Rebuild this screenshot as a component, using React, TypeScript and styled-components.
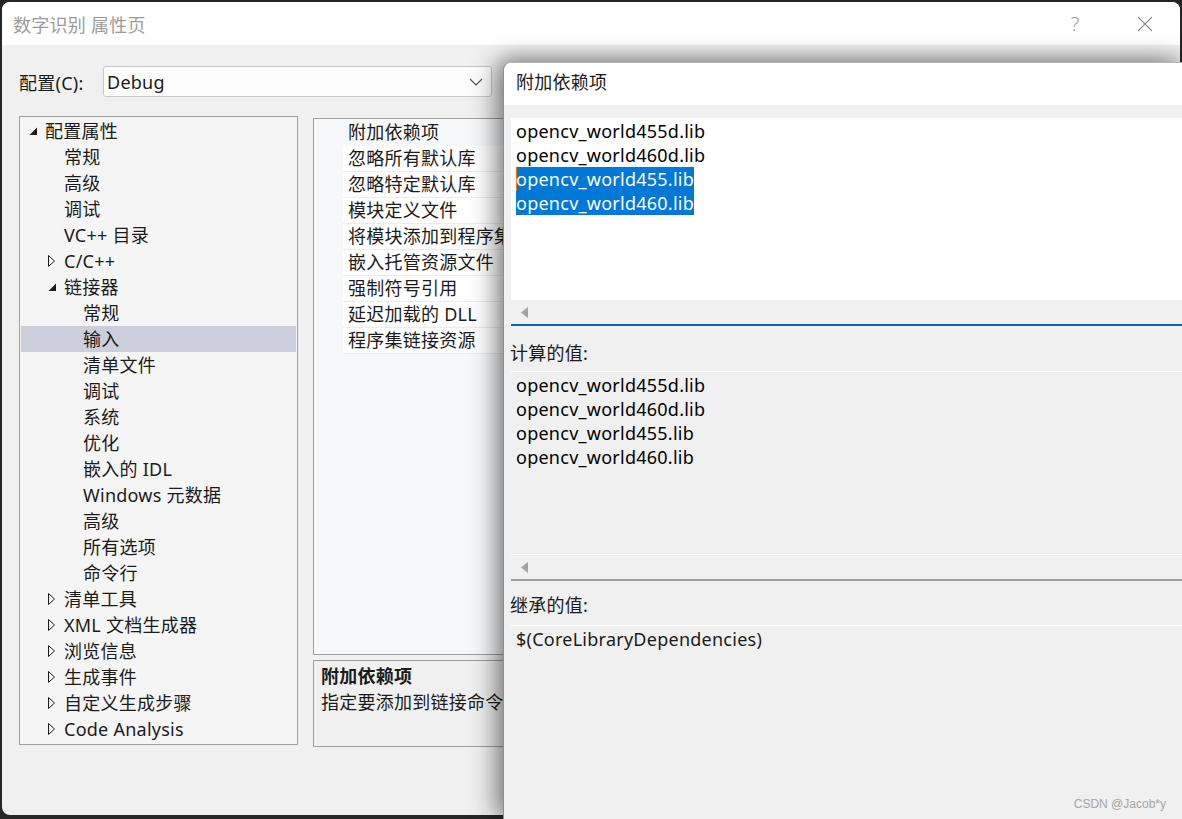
import React from "react";
import styled, { createGlobalStyle } from "styled-components";

const GlobalStyle = createGlobalStyle`
  html, body { margin: 0; padding: 0; background: #262626; }
  body { font-family: "Noto Sans", "Noto Sans CJK SC", sans-serif; }
`;

const FONT = `"Noto Sans", "Noto Sans CJK SC", sans-serif`;

const Screen = styled.div`
  position: relative;
  width: 1182px;
  height: 819px;
  overflow: hidden;
  box-sizing: border-box;
  padding: 2px 2px 4px 2px;
  background: #262626;
  font-family: ${FONT};
  font-size: 18px;
  letter-spacing: 0.25px;
  color: #1b1b1b;
`;

const Window = styled.div`
  height: 100%;
  display: flex;
  flex-direction: column;
  border-radius: 8px;
  overflow: hidden;
  background: #f0f0f0;
`;

const TitleBar = styled.div`
  height: 43px;
  flex: none;
  display: flex;
  align-items: center;
  background: #ffffff;
  padding-left: 11px;
`;

const TitleText = styled.div`
  flex: 1;
  color: #9b9b9b;
  font-size: 18px;
`;

const TitleButton = styled.div`
  width: 70px;
  height: 43px;
  display: flex;
  align-items: center;
  justify-content: center;
  color: #9a9a9a;
  font-size: 20px;
  font-weight: 300;
`;

const Body = styled.div`
  flex: 1;
  display: flex;
  flex-direction: column;
  padding: 21px 0 0 17px;
`;

const ConfigRow = styled.div`
  display: flex;
  align-items: center;
  height: 31px;
`;

const ConfigLabel = styled.div`
  width: 84px;
`;

const Select = styled.div`
  width: 389px;
  height: 31px;
  box-sizing: border-box;
  display: flex;
  align-items: center;
  justify-content: space-between;
  padding: 0 8px 0 3px;
  background: #fdfdfd;
  border: 1px solid #c8c8c8;
  border-radius: 3px;
`;

const Panels = styled.div`
  display: flex;
  gap: 15px;
  margin-top: 19px;
`;

const TreeBox = styled.div`
  width: 279px;
  height: 629px;
  box-sizing: border-box;
  padding: 1px;
  border: 1px solid #a0a0a0;
  background: #f5f5f5;
`;

const TreeRow = styled.div<{ $level: number; $selected?: boolean }>`
  height: 26px;
  line-height: 26px;
  display: flex;
  align-items: center;
  padding-left: ${(p) => 5 + p.$level * 19}px;
  background: ${(p) => (p.$selected ? "#cccedb" : "transparent")};
  white-space: nowrap;
`;

const Toggle = styled.span`
  width: 19px;
  height: 26px;
  flex: none;
  display: flex;
  align-items: center;
  padding-left: 3px;
  box-sizing: border-box;
`;

const RightCol = styled.div`
  flex: 1;
  margin: 2px 20px 0 0;
  display: flex;
  flex-direction: column;
  gap: 5px;
`;

const GridBox = styled.div`
  height: 537px;
  box-sizing: border-box;
  padding-top: 1px;
  border: 1px solid #a0a0a0;
  background: #f7f8fa;
  overflow: hidden;
`;

const GridRow = styled.div<{ $selected?: boolean }>`
  margin-left: 29px;
  padding-left: 5px;
  height: 26px;
  line-height: 25px;
  box-sizing: border-box;
  border-bottom: 1px solid ${(p) => (p.$selected ? "transparent" : "#ececec")};
  background: ${(p) => (p.$selected ? "transparent" : "#ffffff")};
  white-space: nowrap;
`;

const DescBox = styled.div`
  height: 87px;
  box-sizing: border-box;
  padding: 2px 7px;
  border: 1px solid #a0a0a0;
  background: #f0f0f0;
  line-height: 26px;
  white-space: nowrap;
  overflow: hidden;
`;

const DescTitle = styled.div`
  font-weight: 700;
`;

const Popup = styled.div`
  position: absolute;
  left: 503px;
  top: 62px;
  right: 0;
  bottom: 0;
  display: flex;
  flex-direction: column;
  background: #f0f0f0;
  border-left: 1px solid #8e8e8e;
  border-top: 1px solid #b4b4b4;
  border-top-left-radius: 8px;
  box-shadow: -8px 0 26px rgba(0, 0, 0, 0.42), 0 -6px 18px rgba(0, 0, 0, 0.18);
  overflow: hidden;
`;

const PopupHeader = styled.div`
  height: 42px;
  flex: none;
  box-sizing: border-box;
  padding: 6px 0 0 12px;
  line-height: 26px;
  background: #ffffff;
`;

const PopupBody = styled.div`
  flex: 1;
  display: flex;
  flex-direction: column;
  padding: 13px 0 0 7px;
`;

const EditBox = styled.div`
  background: #ffffff;
  border-bottom: 2px solid #0067c0;
`;

const TextArea = styled.div`
  height: 182px;
  box-sizing: border-box;
  padding: 1px 0 0 5px;
  line-height: 24px;
  color: #000;
`;

const Line = styled.div<{ $selected?: boolean; $caret?: boolean }>`
  width: fit-content;
  white-space: nowrap;
  background: ${(p) => (p.$selected ? "#0078d7" : "transparent")};
  color: ${(p) => (p.$selected ? "#ffffff" : "#000000")};
  box-shadow: ${(p) => (p.$caret ? "inset 1px 0 0 #f07800" : "none")};
`;

const HScroll = styled.div<{ $sep?: boolean }>`
  height: ${(p) => (p.$sep ? 25 : 24)}px;
  box-sizing: border-box;
  display: flex;
  align-items: center;
  padding-left: 9px;
  background: #f0f0f0;
  border-top: ${(p) => (p.$sep ? "1px solid #ffffff" : "none")};
`;

const FieldLabel = styled.div<{ $top: number; $bottom: number }>`
  line-height: 26px;
  margin: ${(p) => p.$top}px 0 ${(p) => p.$bottom}px -1px;
`;

const ReadBox = styled.div`
  border-top: 1px solid #ffffff;
  border-bottom: 2px solid #a0a0a0;
`;

const InheritBox = styled.div`
  flex: 1;
  border-top: 1px solid #ffffff;
  padding: 1px 0 0 5px;
  line-height: 24px;
`;

const Watermark = styled.div`
  position: absolute;
  right: 16px;
  bottom: 8px;
  font-family: "Liberation Sans", "Noto Sans", sans-serif;
  font-size: 12px;
  letter-spacing: 0;
  color: #a6a6a6;
`;

const ExpandedIcon = () => (
  <svg width="9" height="9" viewBox="0 0 9 9">
    <polygon points="8,0.5 8,8 0.5,8" fill="#1b1b1b" />
  </svg>
);

const CollapsedIcon = () => (
  <svg width="8" height="12" viewBox="0 0 8 12">
    <polygon points="0.5,0.5 6.5,6 0.5,11.5" fill="none" stroke="#1b1b1b" strokeWidth="1" />
  </svg>
);

const ScrollLeftIcon = () => (
  <svg width="9" height="11" viewBox="0 0 9 11">
    <polygon points="8,0 8,11 1,5.5" fill="#a2a2a2" />
  </svg>
);

const Chevron = () => (
  <svg width="14" height="8" viewBox="0 0 14 8">
    <polyline points="1,1 7,7 13,1" fill="none" stroke="#555" strokeWidth="1.2" />
  </svg>
);

const CloseIcon = () => (
  <svg width="16" height="16" viewBox="0 0 16 16">
    <path d="M1 1 L15 15 M15 1 L1 15" stroke="#8f8f8f" strokeWidth="1.1" />
  </svg>
);

type TreeItem = { label: string; level: number; toggle?: "open" | "closed"; selected?: boolean };

const tree: TreeItem[] = [
  { label: "配置属性", level: 0, toggle: "open" },
  { label: "常规", level: 1 },
  { label: "高级", level: 1 },
  { label: "调试", level: 1 },
  { label: "VC++ 目录", level: 1 },
  { label: "C/C++", level: 1, toggle: "closed" },
  { label: "链接器", level: 1, toggle: "open" },
  { label: "常规", level: 2 },
  { label: "输入", level: 2, selected: true },
  { label: "清单文件", level: 2 },
  { label: "调试", level: 2 },
  { label: "系统", level: 2 },
  { label: "优化", level: 2 },
  { label: "嵌入的 IDL", level: 2 },
  { label: "Windows 元数据", level: 2 },
  { label: "高级", level: 2 },
  { label: "所有选项", level: 2 },
  { label: "命令行", level: 2 },
  { label: "清单工具", level: 1, toggle: "closed" },
  { label: "XML 文档生成器", level: 1, toggle: "closed" },
  { label: "浏览信息", level: 1, toggle: "closed" },
  { label: "生成事件", level: 1, toggle: "closed" },
  { label: "自定义生成步骤", level: 1, toggle: "closed" },
  { label: "Code Analysis", level: 1, toggle: "closed" },
];

const gridRows = [
  "附加依赖项",
  "忽略所有默认库",
  "忽略特定默认库",
  "模块定义文件",
  "将模块添加到程序集",
  "嵌入托管资源文件",
  "强制符号引用",
  "延迟加载的 DLL",
  "程序集链接资源",
];

const libs = ["opencv_world455d.lib", "opencv_world460d.lib", "opencv_world455.lib", "opencv_world460.lib"];

export default function App() {
  return (
    <>
      <GlobalStyle />
      <Screen>
        <Window>
          <TitleBar>
            <TitleText>数字识别 属性页</TitleText>
            <TitleButton>?</TitleButton>
            <TitleButton>
              <CloseIcon />
            </TitleButton>
          </TitleBar>
          <Body>
            <ConfigRow>
              <ConfigLabel>配置(C):</ConfigLabel>
              <Select>
                <span>Debug</span>
                <Chevron />
              </Select>
            </ConfigRow>
            <Panels>
              <TreeBox>
                {tree.map((item, i) => (
                  <TreeRow key={i} $level={item.level} $selected={item.selected}>
                    <Toggle>
                      {item.toggle === "open" && <ExpandedIcon />}
                      {item.toggle === "closed" && <CollapsedIcon />}
                    </Toggle>
                    <span>{item.label}</span>
                  </TreeRow>
                ))}
              </TreeBox>
              <RightCol>
                <GridBox>
                  {gridRows.map((r, i) => (
                    <GridRow key={i} $selected={i === 0}>
                      {r}
                    </GridRow>
                  ))}
                </GridBox>
                <DescBox>
                  <DescTitle>附加依赖项</DescTitle>
                  <div>指定要添加到链接命令行的附加项。[例如 kernel32.lib]</div>
                </DescBox>
              </RightCol>
            </Panels>
          </Body>
        </Window>
        <Popup>
          <PopupHeader>附加依赖项</PopupHeader>
          <PopupBody>
            <EditBox>
              <TextArea>
                {libs.map((l, i) => (
                  <Line key={i} $selected={i >= 2} $caret={i === 2}>
                    {l}
                  </Line>
                ))}
              </TextArea>
              <HScroll>
                <ScrollLeftIcon />
              </HScroll>
            </EditBox>
            <FieldLabel $top={14} $bottom={5}>计算的值:</FieldLabel>
            <ReadBox>
              <TextArea>
                {libs.map((l, i) => (
                  <Line key={i}>{l}</Line>
                ))}
              </TextArea>
              <HScroll $sep>
                <ScrollLeftIcon />
              </HScroll>
            </ReadBox>
            <FieldLabel $top={11} $bottom={7}>继承的值:</FieldLabel>
            <InheritBox>$(CoreLibraryDependencies)</InheritBox>
          </PopupBody>
        </Popup>
        <Watermark>CSDN @Jacob*y</Watermark>
      </Screen>
    </>
  );
}
